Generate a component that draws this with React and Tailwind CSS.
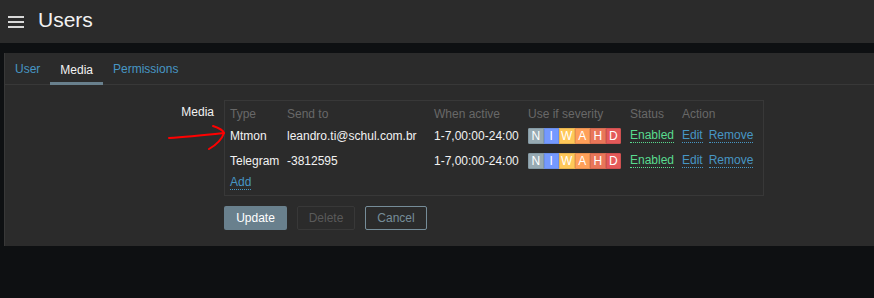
import React from 'react';

const severities = [
    { label: 'N', bg: 'bg-[#97aab3] border-[#859aa4]' },
    { label: 'I', bg: 'bg-[#7499ff] border-[#6a8ee8]' },
    { label: 'W', bg: 'bg-[#ffc859] border-[#e8b450]' },
    { label: 'A', bg: 'bg-[#ffa059] border-[#e89050]' },
    { label: 'H', bg: 'bg-[#e97659] border-[#d46a50]' },
    { label: 'D', bg: 'bg-[#e45959] border-[#cf5050]' },
];

const media = [
    { type: 'Mtmon', sendTo: 'leandro.ti@schul.com.br', when: '1-7,00:00-24:00' },
    { type: 'Telegram', sendTo: '-3812595', when: '1-7,00:00-24:00' },
];

const cols = 'grid grid-cols-[57px_147px_94px_102px_52px_auto] items-center';

const Severity = () => (
    <div className="flex h-[16px] w-[93px] rounded-[2px] overflow-hidden">
        {severities.map((s) => (
            <div key={s.label} className={`${s.bg} border flex-1 flex items-center justify-center text-[12px] text-white leading-none`}>
                {s.label}
            </div>
        ))}
    </div>
);

const DottedLink = ({ children, green }) => (
    <span className={`${green ? 'text-[#59db8f] border-[#59db8f]' : 'text-[#4796c4] border-[#4796c4]'} border-b border-dotted leading-[13px]`}>
        {children}
    </span>
);

const App = () => {
    return (
        <div className="w-[874px] h-[298px] bg-[#0e1012] overflow-hidden text-[12px] text-[#f2f2f2]" style={{ fontFamily: '"Liberation Sans", Arial, sans-serif' }}>
            {/* header */}
            <div className="h-[43px] bg-[#2b2b2b] flex items-center">
                <div className="ml-[8px] w-[16px] flex flex-col gap-[3px]">
                    <div className="h-[2px] bg-[#d8d8d8]" />
                    <div className="h-[2px] bg-[#d8d8d8]" />
                    <div className="h-[2px] bg-[#d8d8d8]" />
                </div>
                <h1 className="ml-[14px] text-[21px] leading-none text-[#f2f2f2] -mt-[5px]">Users</h1>
            </div>

            {/* panel */}
            <div className="relative mt-[10px] ml-[4px] w-[880px] h-[193px] bg-[#2b2b2b] border-l border-[#383838]">
                <div className="flex h-[32px] border-b border-[#383838]">
                    <div className="px-[10px] pt-[7px] text-[#4796c4]">User</div>
                    <div className="px-[10px] pt-[7px] text-[#f2f2f2] border-b-[3px] border-[#69808d] h-[31px] mt-[1px] -mb-px">Media</div>
                    <div className="px-[10px] pt-[7px] text-[#4796c4]">Permissions</div>
                </div>

                <div className="flex mt-[15px]">
                    <div className="w-[219px] text-right pt-[3px] pr-[10px]">Media</div>
                    <div>
                        <div className="w-[540px] h-[96px] border border-[#383838] pl-[5px] pt-[4px]">
                            <div className={`${cols} h-[18px] text-[#686868]`}>
                                <span>Type</span>
                                <span>Send to</span>
                                <span>When active</span>
                                <span>Use if severity</span>
                                <span>Status</span>
                                <span>Action</span>
                            </div>
                            {media.map((m, i) => (
                                <div key={m.type} className={`${cols} ${i === 0 ? 'h-[25px]' : 'h-[26px]'}`}>
                                    <span>{m.type}</span>
                                    <span>{m.sendTo}</span>
                                    <span>{m.when}</span>
                                    <Severity />
                                    <span className="flex">
                                        <DottedLink green>Enabled</DottedLink>
                                    </span>
                                    <span className="flex gap-[6px]">
                                        <DottedLink>Edit</DottedLink>
                                        <DottedLink>Remove</DottedLink>
                                    </span>
                                </div>
                            ))}
                            <div className="h-[17px] flex items-center">
                                <DottedLink>Add</DottedLink>
                            </div>
                        </div>

                        <div className="flex gap-[10px] mt-[10px]">
                            <button className="h-[24px] w-[63px] rounded-[2px] bg-[#69808d] text-white">Update</button>
                            <button className="h-[24px] w-[58px] rounded-[2px] border border-[#383838] text-[#5a5a5a]">Delete</button>
                            <button className="h-[24px] w-[62px] rounded-[2px] border border-[#768d99] text-[#768d99]">Cancel</button>
                        </div>
                    </div>
                </div>

                {/* red annotation arrow */}
                <svg className="absolute left-[160px] top-[68px] pointer-events-none" width="64" height="32" viewBox="0 0 64 32" fill="none">
                    <path d="M4 17 C 20 16, 40 14, 59 12" stroke="#ff0000" strokeWidth="2" strokeLinecap="round" />
                    <path d="M48 5 C 54 7, 58 9, 59 12 C 57 18, 51 24, 44 28" stroke="#ff0000" strokeWidth="2" strokeLinecap="round" />
                </svg>
            </div>
        </div>
    );
};

export default App;
